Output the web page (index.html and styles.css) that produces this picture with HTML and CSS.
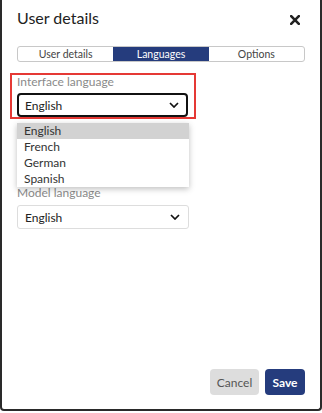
FILE: index.html
```html
<!DOCTYPE html>
<html>
<head>
<meta charset="utf-8">
<link rel="stylesheet" href="styles.css">
</head>
<body>
<div class="dialog">
  <div class="header">
    <h1 class="title">User details</h1>
    <button class="close" aria-label="Close">
      <svg width="10" height="10" viewBox="0 0 10 10"><path d="M1.2 1.2 L8.8 8.8 M8.8 1.2 L1.2 8.8" stroke="#222" stroke-width="2.6" stroke-linecap="square"/></svg>
    </button>
  </div>
  <div class="tabs">
    <div class="tab">User details</div>
    <div class="tab active">Languages</div>
    <div class="tab">Options</div>
  </div>
  <div class="content">
    <div class="focus-wrap">
      <div class="label">Interface language</div>
      <div class="select focused">
        <span>English</span>
        <svg class="chev" width="10" height="6" viewBox="0 0 10 6"><path d="M1 1 L5 5 L9 1" fill="none" stroke="#111" stroke-width="1.7"/></svg>
      </div>
      <ul class="menu">
        <li class="sel">English</li>
        <li>French</li>
        <li>German</li>
        <li>Spanish</li>
      </ul>
    </div>
    <div class="second">
      <div class="label">Model language</div>
      <div class="select">
        <span>English</span>
        <svg class="chev" width="10" height="6" viewBox="0 0 10 6"><path d="M1 1 L5 5 L9 1" fill="none" stroke="#111" stroke-width="1.7"/></svg>
      </div>
    </div>
  </div>
  <div class="footer">
    <button class="btn cancel">Cancel</button>
    <button class="btn save">Save</button>
  </div>
</div>
</body>
</html>
```
FILE: styles.css
```css
* { box-sizing: border-box; }
html, body { margin: 0; padding: 0; background: #fff; }
body { width: 322px; height: 413px; font-family: Lato, "Open Sans", sans-serif; color: #222; }
.dialog {
  width: 322px; height: 411px;
  border: 2px solid #2a2a2a; border-top: none;
  border-radius: 0 0 4px 4px;
  display: flex; flex-direction: column;
  padding: 0 15px;
}
.header { display: flex; justify-content: space-between; align-items: flex-start; padding-top: 8px; height: 46px; }
.title { margin: 0; font-size: 16px; line-height: 20px; font-weight: 400; color: #222; }
.close { border: none; background: none; padding: 0; margin: 7px 5px 0 0; width: 10px; height: 10px; display: flex; }
.tabs { display: grid; grid-template-columns: 1fr 1fr 1fr; height: 16px; border: 1px solid #c8c8c8; border-radius: 3px; overflow: hidden; }
.tab { font-size: 10.5px; line-height: 14px; text-align: center; color: #444; }
.tab.active { background: #253c7d; color: #fff; margin: -1px 0; line-height: 16px; }
.content { margin-top: 11px; }
.focus-wrap { border: 2px solid #e53935; margin-left: -7px; width: 186px; padding: 0 6px 0 5px; position: relative; }
.label { font-size: 12px; color: #8a8a8a; line-height: 14px; }
.select { height: 24px; border: 1px solid #ddd; border-radius: 3px; display: flex; align-items: center; justify-content: space-between; padding: 0 8px 0 7px; font-size: 12px; color: #222; margin-top: 5px; width: 172px; }
.select.focused { border: 2px solid #111; border-radius: 4px; padding-left: 6px; padding-right: 7px; width: 171px; margin-top: 4px; }
.menu { position: absolute; left: 5px; top: 48px; width: 172px; margin: 0; padding: 0; list-style: none; background: #fff; box-shadow: 0 2px 6px rgba(0,0,0,0.25); z-index: 2; }
.menu li { font-size: 12px; line-height: 16px; height: 16px; padding-left: 7px; color: #333; }
.menu li.sel { background: #d2d2d2; }
.second { margin-top: 67px; }
.footer { margin-top: auto; display: flex; justify-content: flex-end; gap: 6px; padding-bottom: 14px; }
.btn { border: none; border-radius: 4px; height: 26px; font-family: inherit; font-size: 12px; padding: 0; }
.cancel { background: #ddd; color: #555; width: 49px; }
.save { background: #253c7d; color: #fff; font-weight: 700; width: 40px; }
```
